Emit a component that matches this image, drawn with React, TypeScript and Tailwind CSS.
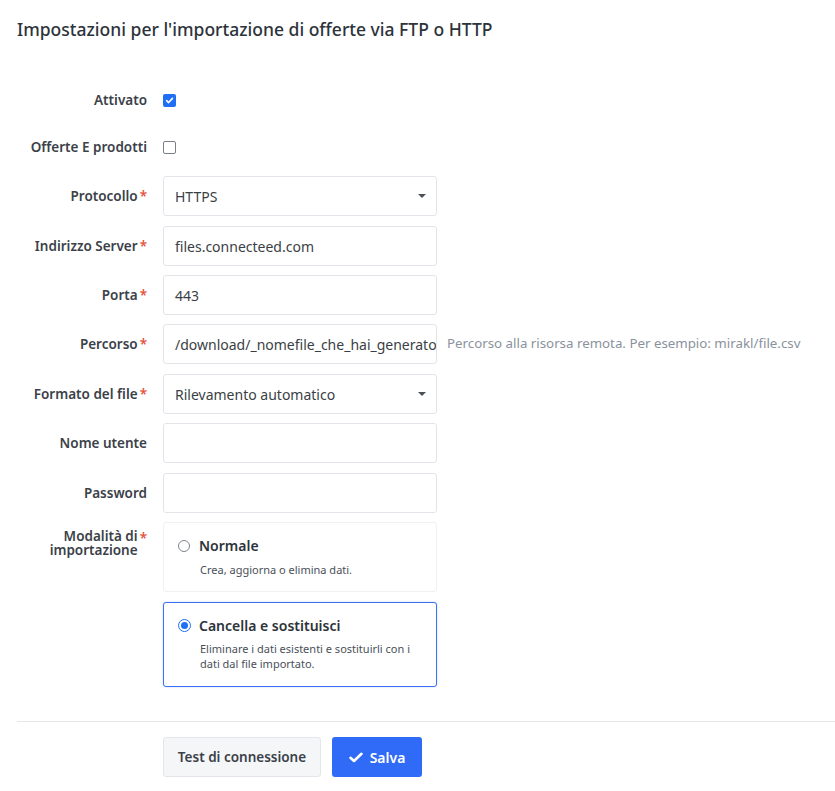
import React from "react";

const Star = () => <span className="text-[#e5533d] ml-[2px]">*</span>;

function Label({ children, req }: { children: React.ReactNode; req?: boolean }) {
  return (
    <div className="flex h-10 items-center justify-end text-[13.5px] font-semibold text-[#3b4148]">
      <span>
        {children}
        {req && <Star />}
      </span>
    </div>
  );
}

function Input({ value }: { value?: string }) {
  return (
    <div className="flex h-10 w-[274px] items-center overflow-hidden whitespace-nowrap rounded-[3px] border border-[#e1e4e8] bg-white px-[11px] text-[14px] text-[#3a3f45]">
      {value}
    </div>
  );
}

function Select({ value }: { value: string }) {
  return (
    <div className="flex h-10 w-[274px] items-center justify-between rounded-[3px] border border-[#e1e4e8] bg-white pl-[11px] pr-[8px] text-[14px] text-[#3a3f45]">
      <span>{value}</span>
      <svg width="10" height="6" viewBox="0 0 10 6" className="mr-[1px]">
        <path d="M1 1 L9 1 L5 5 Z" fill="#4b5058" />
      </svg>
    </div>
  );
}

export default function App() {
  return (
    <div
      className="min-h-[791px] w-[835px] bg-white text-[#3a3f45]"
      style={{ fontFamily: '"Noto Sans", "Open Sans", sans-serif' }}
    >
      <div className="pl-[17px] pt-[17px]">
        <h1 className="text-[17.5px] font-medium leading-6 text-[#2d333a]">
          Impostazioni per l'importazione di offerte via FTP o HTTP
        </h1>
      </div>

      <div className="mt-[39px] grid grid-cols-[147px_274px_auto] gap-x-4">
        <Label>Attivato</Label>
        <div className="flex h-10 items-center">
          <span className="flex h-[13px] w-[13px] items-center justify-center rounded-[2px] bg-[#1f6ef6]">
            <svg width="9" height="9" viewBox="0 0 10 10">
              <path d="M1.8 5.2 L4 7.3 L8.3 2.6" stroke="white" strokeWidth="1.8" fill="none" strokeLinecap="round" strokeLinejoin="round" />
            </svg>
          </span>
        </div>
        <div />

        <div className="col-span-3 h-[7px]" />

        <Label>Offerte E prodotti</Label>
        <div className="flex h-10 items-center">
          <span className="h-[13px] w-[13px] rounded-[2px] border border-[#7a7f86] bg-white" />
        </div>
        <div />

        <div className="col-span-3 h-[9px]" />

        <Label req>Protocollo</Label>
        <Select value="HTTPS" />
        <div />

        <div className="col-span-3 h-[10px]" />

        <Label req>Indirizzo Server</Label>
        <Input value="files.connecteed.com" />
        <div />

        <div className="col-span-3 h-[9px]" />

        <Label req>Porta</Label>
        <Input value="443" />
        <div />

        <div className="col-span-3 h-[9px]" />

        <Label req>Percorso</Label>
        <Input value="/download/_nomefile_che_hai_generato.csv" />
        <div className="-ml-[6px] flex h-10 items-center whitespace-nowrap text-[13.3px] text-[#8a929c]">
          Percorso alla risorsa remota. Per esempio: mirakl/file.csv
        </div>

        <div className="col-span-3 h-[10px]" />

        <Label req>Formato del file</Label>
        <Select value="Rilevamento automatico" />
        <div />

        <div className="col-span-3 h-[9px]" />

        <Label>Nome utente</Label>
        <Input />
        <div />

        <div className="col-span-3 h-[10px]" />

        <Label>Password</Label>
        <Input />
        <div />

        <div className="col-span-3 h-[9px]" />

        <div className="flex justify-end pt-[7px] text-right text-[13.5px] font-semibold leading-[14px] text-[#3b4148]">
          <span className="flex items-start">
            <span>
              Modalità di
              <br />
              importazione
            </span>
            <span className="ml-[2px] mt-[2px] text-[#e5533d]">*</span>
          </span>
        </div>
        <div className="flex flex-col gap-[10px]">
          <div className="h-[70px] rounded-[3px] border border-[#f0f1f3] bg-white px-[14px] pt-[12px]">
            <div className="flex items-center">
              <span className="h-[12px] w-[12px] rounded-full border border-[#80858c] bg-white" />
              <span className="ml-[9px] text-[14px] font-semibold text-[#2d333a]">Normale</span>
            </div>
            <div className="ml-[22px] mt-[6px] text-[11px] text-[#4a5058]">Crea, aggiorna o elimina dati.</div>
          </div>
          <div className="h-[85px] rounded-[3px] border border-[#3b72f5] bg-white px-[14px] pt-[12px] shadow-[0_0_2px_rgba(59,114,245,0.35)]">
            <div className="flex items-center">
              <span className="flex h-[13px] w-[13px] items-center justify-center rounded-full border border-[#1f6ef6] bg-white">
                <span className="h-[7px] w-[7px] rounded-full bg-[#1f6ef6]" />
              </span>
              <span className="ml-[8px] text-[14px] font-semibold text-[#2d333a]">Cancella e sostituisci</span>
            </div>
            <div className="ml-[22px] mt-[5px] text-[11px] leading-[15px] text-[#4a5058]">
              Eliminare i dati esistenti e sostituirli con i dati dal file importato.
            </div>
          </div>
        </div>
        <div />
      </div>

      <div className="ml-[17px] mt-[34px] border-t border-[#e4e6e9]" />

      <div className="ml-[163px] mt-[15px] flex gap-[11px]">
        <button className="h-10 w-[158px] rounded-[3px] border border-[#e3e6ea] bg-[#f5f6f8] text-[13.5px] font-semibold text-[#3b4148]">
          Test di connessione
        </button>
        <button className="flex h-10 w-[90px] items-center justify-center gap-[7px] rounded-[3px] bg-[#2f6bf7] text-[14px] font-semibold text-white">
          <svg width="14" height="11" viewBox="0 0 14 11">
            <path d="M1.5 5.8 L5 9 L12.5 1.8" stroke="white" strokeWidth="2.6" fill="none" strokeLinecap="round" strokeLinejoin="round" />
          </svg>
          Salva
        </button>
      </div>
    </div>
  );
}
